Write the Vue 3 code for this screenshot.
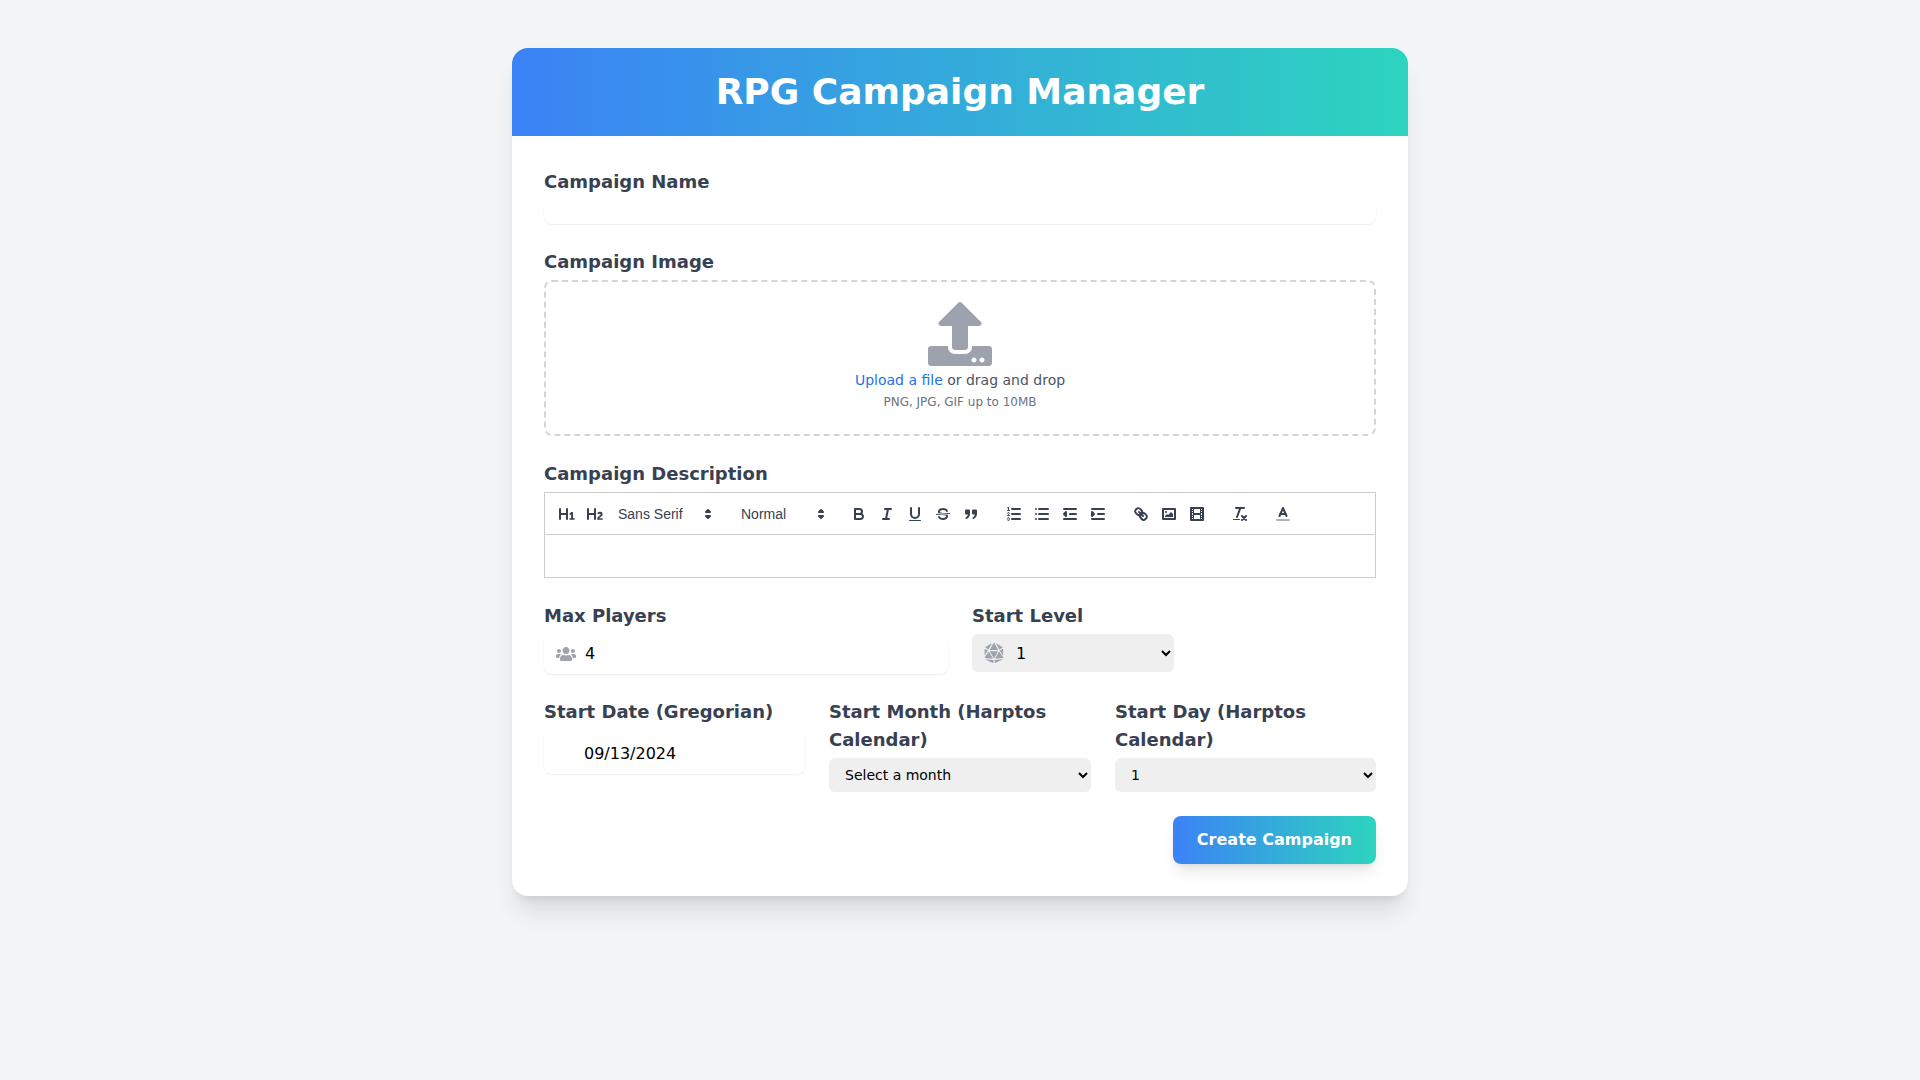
<script setup>
</script>

<template>
  <div class="page">
    <div class="card">
      <header class="head"><h1>RPG Campaign Manager</h1></header>
      <form class="body" @submit.prevent>
        <div class="group">
          <label>Campaign Name</label>
          <input class="plain name" type="text" />
        </div>
        <div class="group">
          <label>Campaign Image</label>
          <div class="drop">
            <svg class="upload" viewBox="0 0 512 512" width="64" height="64"><path fill="#9ca3af" d="M296 384h-80c-13.3 0-24-10.700-24-24V192h-87.700c-17.800 0-26.700-21.500-14.100-34.100L242.300 5.700c7.500-7.500 19.800-7.500 27.300 0l152.200 152.200c12.600 12.600 3.700 34.100-14.100 34.100H320v168c0 13.300-10.700 24-24 24zm216-8v112c0 13.300-10.700 24-24 24H24c-13.300 0-24-10.700-24-24V376c0-13.300 10.700-24 24-24h136v8c0 30.900 25.100 56 56 56h80c30.900 0 56-25.100 56-56v-8h136c13.300 0 24 10.700 24 24zm-124 88c0-11-9-20-20-20s-20 9-20 20 9 20 20 20 20-9 20-20zm64 0c0-11-9-20-20-20s-20 9-20 20 9 20 20 20 20-9 20-20z"/></svg>
            <p class="dz1"><a>Upload a file</a> or drag and drop</p>
            <p class="dz2">PNG, JPG, GIF up to 10MB</p>
          </div>
        </div>
        <div class="group">
          <label>Campaign Description</label>
          <div class="editor">
            <div class="toolbar">
              <span class="btn"><svg viewBox="0 0 18 18"><path class="fl" d="M10,4V14a1,1,0,0,1-2,0V10H3v4a1,1,0,0,1-2,0V4A1,1,0,0,1,3,4V8H8V4a1,1,0,0,1,2,0Zm6.06787,9.209H14.98975V7.59863a.54085.54085,0,0,0-.605-.60547h-.62744a1.01119,1.01119,0,0,0-.748.29688L11.645,8.56641a.5435.5435,0,0,0-.022.8584l.28613.30762a.53861.53861,0,0,0,.84717.0332l.09912-.08789a1.2137,1.2137,0,0,0,.2417-.35254h.02246s-.01123.30859-.01123.60547V13.209H12.041a.54085.54085,0,0,0-.605.60547v.43945a.54085.54085,0,0,0,.605.60547h4.02686a.54085.54085,0,0,0,.605-.60547v-.43945A.54085.54085,0,0,0,16.06787,13.209Z"/></svg></span>
              <span class="btn"><svg viewBox="0 0 18 18"><path class="fl" d="M16.73975,13.81445v.43945a.54085.54085,0,0,1-.605.60547H11.855a.58392.58392,0,0,1-.64893-.60547V14.0127c0-2.90527,3.39941-3.42187,3.39941-4.55469a.77675.77675,0,0,0-.84717-.78125,1.17684,1.17684,0,0,0-.83594.38477c-.2749.26367-.561.374-.85791.13184l-.4292-.34082c-.30811-.24219-.38525-.51758-.1543-.81445a2.97155,2.97155,0,0,1,2.45361-1.17676,2.45393,2.45393,0,0,1,2.68408,2.40918c0,2.45312-3.1792,2.92676-3.27832,3.93848h2.79443A.54085.54085,0,0,1,16.73975,13.81445ZM9,3A.99974.99974,0,0,0,8,4V8H3V4A1,1,0,0,0,1,4V14a1,1,0,0,0,2,0V10H8v4a1,1,0,0,0,2,0V4A.99974.99974,0,0,0,9,3Z"/></svg></span>
              <span class="pick font">Sans Serif<svg viewBox="0 0 18 18"><polygon class="st" points="7 11 9 13 11 11 7 11"/><polygon class="st" points="7 7 9 5 11 7 7 7"/></svg></span>
              <span class="pick size">Normal<svg viewBox="0 0 18 18"><polygon class="st" points="7 11 9 13 11 11 7 11"/><polygon class="st" points="7 7 9 5 11 7 7 7"/></svg></span>
              <span class="btn"><svg viewBox="0 0 18 18"><path class="st" d="M5,4H9.5A2.5,2.5,0,0,1,12,6.5v0A2.5,2.5,0,0,1,9.5,9H5A0,0,0,0,1,5,9V4A0,0,0,0,1,5,4Z"/><path class="st" d="M5,9h5.5A2.5,2.5,0,0,1,13,11.5v0A2.5,2.5,0,0,1,10.5,14H5a0,0,0,0,1,0,0V9A0,0,0,0,1,5,9Z"/></svg></span>
              <span class="btn"><svg viewBox="0 0 18 18"><path class="st" d="M7 4H13M5 14H11M8 14 10 4"/></svg></span>
              <span class="btn"><svg viewBox="0 0 18 18"><path class="st" d="M5,3V9a4.012,4.012,0,0,0,4,4H9a4.012,4.012,0,0,0,4-4V3"/><rect class="fl" height="1" rx="0.5" ry="0.5" width="12" x="3" y="15"/></svg></span>
              <span class="btn"><svg viewBox="0 0 18 18"><path class="thin" d="M15.5 8.500 2.500 9.500"/><path class="fl" d="M9.007,8C6.542,7.791,6,7.519,6,6.5,6,5.792,7.283,5,9,5c1.571,0,2.765.679,2.969,1.309a1,1,0,0,0,1.900-.617C13.356,4.106,11.354,3,9,3,6.200,3,4,4.538,4,6.500a3.200,3.200,0,0,0,.500,1.843Z"/><path class="fl" d="M8.984,10C11.457,10.208,12,10.479,12,11.500c0,.708-1.283,1.500-3,1.500-1.571,0-2.765-.679-2.969-1.309a1,1,0,1,0-1.900.617C4.644,13.894,6.646,15,9,15c2.800,0,5-1.538,5-3.500a3.200,3.200,0,0,0-.500-1.843Z"/></svg></span>
              <span class="btn"><svg viewBox="0 0 18 18"><rect class="fl st" height="3" width="3" x="4" y="5.500"/><rect class="fl st" height="3" width="3" x="11" y="5.500"/><path class="st" d="M7,8.500C7,10.600,5.800,12.200,4.500,13"/><path class="st" d="M14,8.500C14,10.600,12.800,12.200,11.500,13"/></svg></span>
              <span class="sp"></span>
              <span class="btn"><svg viewBox="0 0 18 18"><path class="st" d="M7 4H15M7 9H15M7 14H15"/><path class="thin" d="M2.500 5.500H4.500"/><path class="fl" d="M3.500,6A0.500,0.500,0,0,1,3,5.500V3.085l-0.276.138A0.500,0.500,0,0,1,2.053,3c-0.124-.247-0.023-0.324.224-0.447l1-.500A0.500,0.500,0,0,1,4,2.500v3A0.500,0.500,0,0,1,3.500,6Z"/><path class="thin" d="M4.500,10.500h-2c0-.234,1.850-1.076,1.850-2.234A0.959,0.959,0,0,0,2.500,8.156"/><path class="thin" d="M2.500,14.846a0.959,0.959,0,0,0,1.850-.109A0.700,0.700,0,0,0,3.750,14a0.688,0.688,0,0,0,.600-0.736,0.959,0.959,0,0,0-1.850-.109"/></svg></span>
              <span class="btn"><svg viewBox="0 0 18 18"><path class="st" d="M6 4H15M6 9H15M6 14H15M3 4H3M3 9H3M3 14H3"/></svg></span>
              <span class="btn"><svg viewBox="0 0 18 18"><path class="st" d="M3 14H15M3 4H15M9 9H15"/><polygon class="fl st" points="5 7 5 11 3 9 5 7"/></svg></span>
              <span class="btn"><svg viewBox="0 0 18 18"><path class="st" d="M3 14H15M3 4H15M9 9H15"/><polygon class="fl st" points="3 7 3 11 5 9 3 7"/></svg></span>
              <span class="sp"></span>
              <span class="btn"><svg viewBox="0 0 18 18"><path class="st" d="M7 7 11 11"/><path class="st" d="M8.900,4.577a3.476,3.476,0,0,1,.360,4.679A3.476,3.476,0,0,1,4.577,8.900C3.185,7.500,2.035,6.400,4.217,4.217S7.500,3.185,8.900,4.577Z"/><path class="st" d="M13.423,9.100a3.476,3.476,0,0,0-4.679-.360,3.476,3.476,0,0,0,.360,4.679c1.392,1.392,2.500,2.542,4.679.360S14.815,10.500,13.423,9.100Z"/></svg></span>
              <span class="btn"><svg viewBox="0 0 18 18"><rect class="st" height="10" width="12" x="3" y="4"/><circle class="fl" cx="6" cy="7" r="1"/><polyline class="fl" points="5 12 5 11 7 9 8 10 11 7 13 9 13 12 5 12"/></svg></span>
              <span class="btn"><svg viewBox="0 0 18 18"><rect class="st" height="12" width="12" x="3" y="3"/><path class="fl" d="M5 3h1v12H5zM12 3h1v12h-1zM5 8h8v2H5zM3 5h3v1H3zM3 7h3v1H3zM3 10h3v1H3zM3 12h3v1H3zM12 5h3v1h-3zM12 7h3v1h-3zM12 10h3v1h-3zM12 12h3v1h-3z"/></svg></span>
              <span class="sp"></span>
              <span class="btn"><svg viewBox="0 0 18 18"><path class="st" d="M5 3H13M6 12 9.350 3M11 11 15 15M15 11 11 15"/><rect class="fl" height="1" rx="0.5" ry="0.5" width="7" x="2" y="14"/></svg></span>
              <span class="sp"></span>
              <span class="btn"><svg viewBox="0 0 18 18"><path class="st faded" d="M3 15H15"/><polyline class="st" points="5.500 11 9 3 12.500 11"/><path class="st" d="M11.630 9H6.380"/></svg></span>
            </div>
            <div class="content"></div>
          </div>
        </div>
        <div class="row two">
          <div class="group">
            <label>Max Players</label>
            <div class="iconbox">
              <svg class="users" viewBox="0 0 640 512" width="20" height="16"><path fill="#9ca3af" d="M96 224c35.300 0 64-28.700 64-64s-28.700-64-64-64-64 28.700-64 64 28.700 64 64 64zm448 0c35.300 0 64-28.700 64-64s-28.700-64-64-64-64 28.700-64 64 28.700 64 64 64zm32 32h-64c-17.600 0-33.500 7.100-45.100 18.600 40.300 22.100 68.900 62 75.100 109.400h66c17.700 0 32-14.300 32-32v-32c0-35.300-28.700-64-64-64zm-256 0c61.900 0 112-50.100 112-112S381.900 32 320 32 208 82.100 208 144s50.100 112 112 112zm76.800 32h-8.300c-20.800 10-43.900 16-68.500 16s-47.600-6-68.500-16h-8.300C179.600 288 128 339.600 128 403.200V432c0 26.500 21.500 48 48 48h288c26.500 0 48-21.500 48-48v-28.800c0-63.600-51.600-115.200-115.200-115.200zm-223.700-13.400C161.500 263.100 145.600 256 128 256H64c-35.300 0-64 28.700-64 64v32c0 17.700 14.300 32 32 32h65.900c6.300-47.400 34.900-87.300 75.200-109.400z"/></svg>
              <input class="plain players" type="text" value="4" />
            </div>
          </div>
          <div class="group">
            <label>Start Level</label>
            <div class="selwrap">
              <svg class="d20" viewBox="0 0 480 512" width="20" height="20"><path fill="#9ca3af" d="M106.750 215.060L1.200 370.950c-3.080 5 .100 11.500 5.930 12.140l208.260 22.070-108.640-190.100zM7.410 315.430L82.700 193.080 6.060 147.100c-2.670-1.600-6.060.320-6.060 3.430v162.810c0 4.030 5.290 5.530 7.410 2.090zM18.250 423.600l194.400 87.660c5.300 2.450 11.350-1.430 11.350-7.260v-65.670l-203.550-22.300c-4.450-.500-6.230 5.590-2.200 7.570zm81.220-257.780L179.400 22.880c4.340-7.060-3.590-15.250-10.780-11.140L17.810 110.350c-2.470 1.620-2.390 5.260.130 6.780l81.530 48.690zM240 176h109.210L253.630 7.620C250.500 2.540 245.250 0 240 0s-10.500 2.540-13.630 7.620L130.790 176H240zm226.060-29.960l-76.640 45.990 75.290 122.350c2.110 3.440 7.410 1.940 7.410-2.100V150.530c-.010-3.110-3.390-5.030-6.060-3.490zm-86.530 19.780l81.530-48.700c2.530-1.520 2.600-5.160.130-6.780L310.380 11.740c-7.190-4.110-15.120 4.080-10.780 11.140l79.930 142.940zm79.340 250.210l-203.550 22.300V504c0 5.820 6.050 9.700 11.350 7.260l194.400-87.660c4.030-1.980 2.250-8.070-2.200-7.570zM373.250 215.060l-108.640 190.100 208.260-22.070c5.830-.640 9.010-7.140 5.930-12.140L373.250 215.060zM240 208H130.980L240 397.120 349.020 208H240z"/></svg>
              <select class="level"><option>1</option></select>
            </div>
          </div>
        </div>
        <div class="row three">
          <div class="group">
            <label>Start Date (Gregorian)</label>
            <div class="datebox"><input class="plain date" type="text" value="09/13/2024" /></div>
          </div>
          <div class="group">
            <label>Start Month (Harptos Calendar)</label>
            <select class="sel"><option>Select a month</option></select>
          </div>
          <div class="group">
            <label>Start Day (Harptos Calendar)</label>
            <select class="sel"><option>1</option></select>
          </div>
        </div>
        <div class="actions"><button class="submit" type="submit">Create Campaign</button></div>
      </form>
    </div>
  </div>
</template>

<style>
html, body { margin: 0; background: #f3f4f6; }
</style>

<style scoped>
* { box-sizing: border-box; }
.page { min-height: 1080px; background: #f3f4f6; padding-top: 48px; font-family: "DejaVu Sans", sans-serif; }
.card { width: 896px; margin: 0 auto; background: #fff; border-radius: 16px; overflow: hidden; box-shadow: 0 20px 25px -5px rgba(0,0,0,.1), 0 8px 10px -6px rgba(0,0,0,.1); }
.head { height: 88px; padding: 24px; background: linear-gradient(90deg, #3b82f6, #2dd4bf); }
h1 { margin: 0; color: #fff; font-size: 36px; line-height: 40px; font-weight: 700; text-align: center; }
.body { padding: 32px; display: flex; flex-direction: column; gap: 24px; }
label { display: block; color: #374151; font-size: 18px; line-height: 28px; font-weight: 700; margin-bottom: 4px; }
.plain { display: block; border: 0; outline: 0; background: transparent; font: 16px "DejaVu Sans", sans-serif; color: #000; padding: 0; width: 100%; }
.name { height: 22px; margin-top: 6px; border-radius: 8px; box-shadow: 0 1px 2px rgba(0,0,0,.06), 0 0 2px rgba(0,0,0,.03); }
.drop { height: 156px; border: 2px dashed #d1d5db; border-radius: 8px; display: flex; flex-direction: column; align-items: center; padding-top: 20px; }
.upload { display: block; margin-bottom: 4px; }
.dz1 { margin: 0; font-size: 14px; line-height: 20px; color: #4b5563; }
.dz1 a { color: #1d72e8; }
.dz2 { margin: 4px 0 0; font-size: 12px; line-height: 16px; color: #6b7280; }
.editor { border: 1px solid #ccc; font-family: "Liberation Sans", sans-serif; }
.toolbar { height: 42px; border-bottom: 1px solid #ccc; display: flex; align-items: center; padding: 8px; }
.btn { width: 28px; height: 24px; padding: 3px 5px; flex: none; }
.btn svg { display: block; width: 18px; height: 18px; }
.st { fill: none; stroke: #374151; stroke-width: 2; stroke-linecap: round; stroke-linejoin: round; }
.thin { fill: none; stroke: #374151; stroke-width: 1; stroke-linecap: round; stroke-linejoin: round; }
.fl { fill: #374151; }
.st.fl { fill: #374151; }
.faded { opacity: .4; }
.pick { display: flex; align-items: center; height: 24px; color: #374151; font-size: 14px; font-weight: 500; position: relative; flex: none; }
.pick svg { position: absolute; right: 0; top: 3px; width: 18px; height: 18px; }
.font { width: 108px; margin-right: 15px; padding-left: 9px; }
.size { width: 98px; margin-right: 15px; padding-left: 9px; }
.sp { width: 15px; flex: none; }
.content { height: 42px; }
.row { display: grid; gap: 24px; }
.two { grid-template-columns: 1fr 1fr; }
.three { grid-template-columns: 261px 262px 261px; }
.iconbox { display: flex; align-items: center; height: 40px; border-radius: 8px; padding-left: 12px; box-shadow: 0 1px 2px rgba(0,0,0,.06), 0 0 2px rgba(0,0,0,.03); }
.users { flex: none; }
.players { margin-left: 9px; position: relative; top: -1px; }
.selwrap { position: relative; width: 202px; }
.d20 { position: absolute; left: 12px; top: 9px; }
.level { display: block; width: 100%; height: 38px; padding-left: 40px; border: 0; border-radius: 6px; background-color: #efefef; font: 16px "DejaVu Sans", sans-serif; color: #000; }
.datebox { height: 44px; border-radius: 8px; padding: 3px 0 0 40px; display: flex; align-items: center; box-shadow: 0 1px 2px rgba(0,0,0,.06), 0 0 2px rgba(0,0,0,.03); }
.date { width: 213px; height: 100%; box-shadow: 1px 0 0 rgba(0,0,0,.012); }
.sel { display: block; width: 100%; height: 34px; padding-left: 12px; border: 0; border-radius: 6px; background-color: #efefef; font: 14px "DejaVu Sans", sans-serif; color: #000; }
.actions { display: flex; justify-content: flex-end; }
.submit { height: 48px; padding: 0 24px 2px; border: 0; border-radius: 8px; color: #fff; font: 700 16px "DejaVu Sans", sans-serif; background: linear-gradient(90deg, #3b82f6, #2dd4bf); box-shadow: 0 10px 15px -3px rgba(0,0,0,.1), 0 4px 6px -4px rgba(0,0,0,.1); }
</style>
